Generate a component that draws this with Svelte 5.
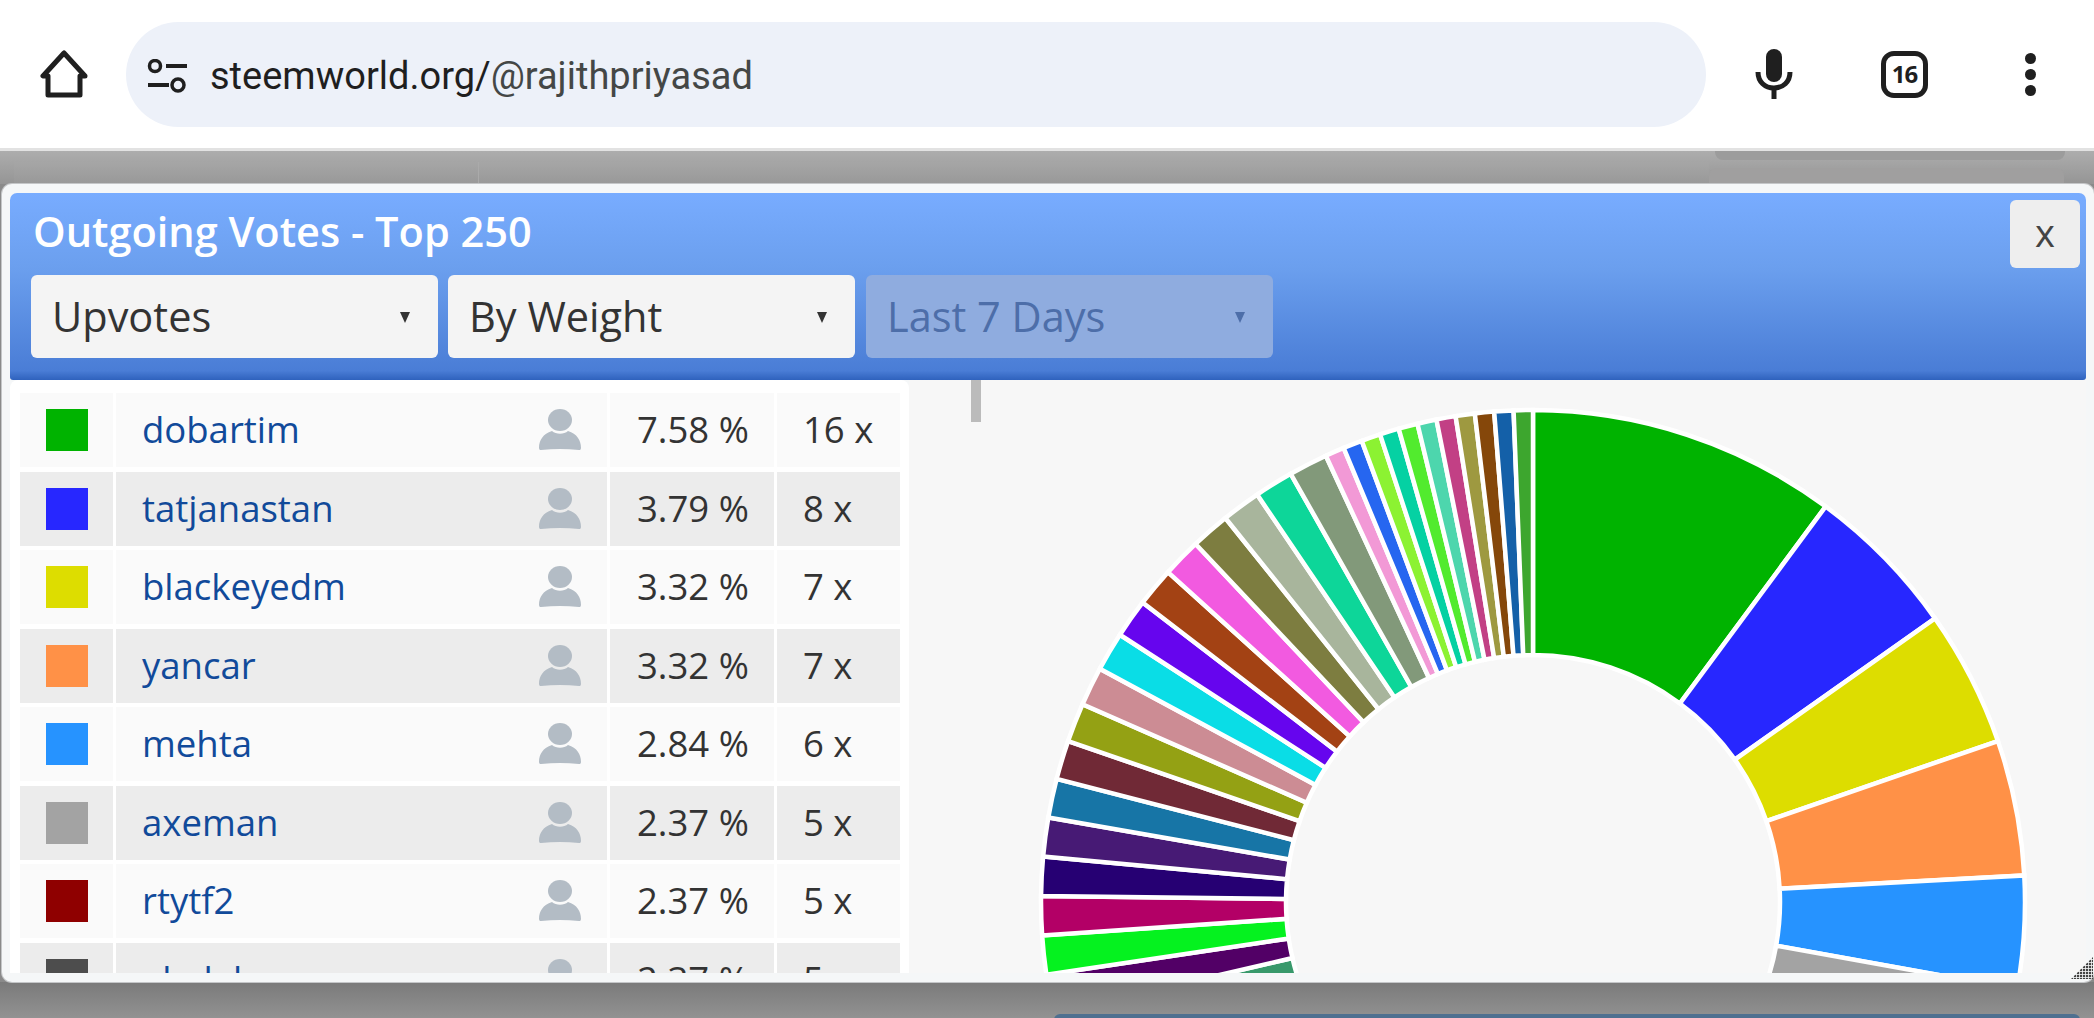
<script>
  // vote table rows
  const rows = [
    { name: "dobartim", color: "#00b300", pct: "7.58 %", count: "16 x" },
    { name: "tatjanastan", color: "#2727ff", pct: "3.79 %", count: "8 x" },
    { name: "blackeyedm", color: "#dddd00", pct: "3.32 %", count: "7 x" },
    { name: "yancar", color: "#ff9147", pct: "3.32 %", count: "7 x" },
    { name: "mehta", color: "#2693ff", pct: "2.84 %", count: "6 x" },
    { name: "axeman", color: "#a3a3a3", pct: "2.37 %", count: "5 x" },
    { name: "rtytf2", color: "#8f0000", pct: "2.37 %", count: "5 x" },
    { name: "akolak", color: "#4d4d4d", pct: "2.37 %", count: "5 x" },
  ];

  const cx = 624;
  const cy = 522;
  const outer = 492;
  const inner = 247;

  function point(r, deg) {
    const a = (deg * Math.PI) / 180;
    return `${(cx + r * Math.sin(a)).toFixed(2)} ${(cy - r * Math.cos(a)).toFixed(2)}`;
  }

  function slicePath(a, b) {
    return `M${point(outer, a)} A${outer} ${outer} 0 0 1 ${point(outer, b)} L${point(inner, b)} A${inner} ${inner} 0 0 0 ${point(inner, a)} Z`;
  }

  // slices of the right side, clockwise from the top
  let slices = [];
  let angle = 0;
  for (const [color, deg] of [
    ["#00b300", 36.5], ["#2727ff", 18.3], ["#dddd00", 16.1],
    ["#ff9147", 16.0], ["#2693ff", 13.3], ["#a3a3a3", 11.38],
  ]) {
    slices.push({ color, d: slicePath(angle, angle + deg) });
    angle += deg;
  }

  // left side: wide ones first, then the thin ones up to the top
  const wide = ["#38996b", "#520066", "#05f21f", "#b30066", "#260073", "#471a75", "#1775a6", "#702936", "#94a114", "#cc8c94", "#0adde6", "#6605ee", "#a34214", "#f25ae0", "#7d7d40", "#a8b59c", "#0dd699", "#82997a"];
  const thin = ["#f299d6", "#2666f0", "#8cf232", "#05d1a3", "#52eb2e", "#4dd6ad", "#c24085", "#9e9940", "#85470a", "#1460a8", "#3da62e"];
  angle = 252.3;
  wide.forEach((color) => {
    slices.push({ color, d: slicePath(angle, angle + 4.6) });
    angle += 4.6;
  });
  thin.forEach((color) => {
    const step = (360 - 335.1) / thin.length;
    slices.push({ color, d: slicePath(angle, angle + step) });
    angle += step;
  });
</script>

<div class="page">
  <header class="toolbar">
    <svg class="home" width="48" height="48" viewBox="0 0 48 48">
      <path d="M24 3 L3 26 H8 V45 H40 V26 H45 Z" fill="none" stroke="#1f1f1f" stroke-width="5" stroke-linejoin="round" />
    </svg>
    <div class="omnibox">
      <svg class="tune" width="40" height="34" viewBox="0 0 40 34">
        <circle cx="8" cy="7" r="5.5" fill="none" stroke="#1f1f1f" stroke-width="3.5" />
        <path d="M19 7 H40 M1 26 H22" stroke="#1f1f1f" stroke-width="4" />
        <circle cx="31" cy="26" r="6" fill="none" stroke="#1f1f1f" stroke-width="3.5" />
      </svg>
      <span class="url">steemworld.org/<span class="path">@rajithpriyasad</span></span>
    </div>
    <svg class="mic" width="38" height="52" viewBox="0 0 38 52">
      <rect x="11" y="1" width="16" height="33" rx="8" fill="#1f1f1f" />
      <path d="M3 24 C3 34 10 40 19 40 C28 40 35 34 35 24" fill="none" stroke="#1f1f1f" stroke-width="5" />
      <path d="M19 40 V51" stroke="#1f1f1f" stroke-width="5" />
    </svg>
    <div class="tabs">16</div>
    <div class="dots"><i></i><i></i><i></i></div>
  </header>

  <div class="backdrop">
    <div class="behind-top">
      <div class="behind-band"></div>
      <div class="behind-row">
        <div class="behind-cell first"></div>
        <div class="behind-cell second"></div>
        <div class="behind-card"></div>
      </div>
    </div>

    <section class="modal">
      <div class="head">
        <div class="title">Outgoing Votes - Top 250</div>
        <div class="selects">
          <div class="select">Upvotes<span class="arrow"></span></div>
          <div class="select">By Weight<span class="arrow"></span></div>
          <div class="select off">Last 7 Days<span class="arrow"></span></div>
        </div>
        <div class="close">x</div>
      </div>

      <div class="body">
        <div class="list">
          {#each rows as row, i}
            <div class="row" class:even={i % 2 === 1}>
              <div class="cell swatch"><span style="background:{row.color}"></span></div>
              <div class="cell name">
                <span class="label">{row.name}</span>
                <svg width="42" height="42" viewBox="0 0 42 42">
                  <ellipse cx="21" cy="11" rx="12" ry="11" fill="#b3bcc5" />
                  <path d="M0 39 C0 31 4 25 13 22 C17 25.500 25 25.500 29 22 C38 25 42 31 42 39 Q42 41.500 40 41 Q21 39 2 41 Q0 41.500 0 39 Z" fill="#b3bcc5" />
                </svg>
              </div>
              <div class="cell pct"><span class="label">{row.pct}</span></div>
              <div class="cell count"><span class="label">{row.count}</span></div>
            </div>
          {/each}
        </div>
        <div class="chart">
          <div class="thumb"></div>
          <svg width="1176" height="593" viewBox="0 0 1176 593">
            {#each slices as s}
              <path d={s.d} fill={s.color} stroke="#fff" stroke-width="4.5" />
            {/each}
          </svg>
        </div>
      </div>
      <svg class="grip" width="22" height="22" viewBox="0 0 22 22">
        <defs>
          <pattern id="grip-dots" width="3" height="3" patternUnits="userSpaceOnUse">
            <rect width="2.200" height="2.200" fill="#444" />
          </pattern>
        </defs>
        <path d="M22 0 V22 H0 Z" fill="url(#grip-dots)" />
      </svg>
    </section>

    <div class="behind-bottom"><div class="behind-bar"></div></div>
  </div>
</div>

<style>
  :global(body) {
    margin: 0;
    background: #8a8a8a;
  }
  .page {
    width: 2094px;
    height: 1018px;
    overflow: hidden;
    font-family: "Open Sans", sans-serif;
    color: #333;
  }
  .toolbar {
    height: 148px;
    box-sizing: border-box;
    background: #fff;
    display: flex;
    align-items: center;
  }
  .home {
    margin-left: 40px;
    margin-top: -1px;
  }
  .omnibox {
    margin-left: 38px;
    width: 1580px;
    height: 105px;
    margin-top: 1px;
    border-radius: 53px;
    background: #edf1f9;
    display: flex;
    align-items: center;
  }
  .tune {
    margin-left: 21px;
    margin-top: 2px;
  }
  .url {
    margin-left: 23px;
    margin-top: 2px;
    font-family: Roboto, sans-serif;
    font-size: 38px;
    color: #1f1f1f;
  }
  .path {
    color: #444746;
  }
  .mic {
    margin-left: 49px;
  }
  .tabs {
    margin-left: 88px;
    width: 47px;
    height: 47px;
    box-sizing: border-box;
    border: 5px solid #1f1f1f;
    border-radius: 13px;
    font-family: "Open Sans", sans-serif;
    font-weight: 700;
    font-size: 24px;
    letter-spacing: -1px;
    line-height: 36px;
    text-align: center;
    color: #1f1f1f;
  }
  .dots {
    margin-left: 97px;
    display: flex;
    flex-direction: column;
    gap: 5px;
  }
  .dots i {
    display: block;
    width: 11px;
    height: 11px;
    border-radius: 50%;
    background: #1f1f1f;
  }
  .backdrop {
    height: 870px;
    border-top: 3px solid #e2e2e2;
    background: #8a8a8a;
  }
  .behind-top {
    height: 33px;
    box-sizing: border-box;
    background: linear-gradient(#adadad, #959595);
  }
  .behind-band {
    height: 9px;
    width: 350px;
    margin-left: 1715px;
    border-radius: 0 0 8px 8px;
    background: #9c9c9c;
  }
  .behind-row {
    display: flex;
    height: 24px;
  }
  .behind-cell {
    height: 24px;
    margin-top: 2px;
    background: linear-gradient(#a6a6a6, #979797);
  }
  .first {
    width: 464px;
    margin-left: 14px;
    border-right: 1px solid #aaa;
  }
  .second {
    width: 1230px;
  }
  .behind-card {
    width: 355px;
    margin-top: 8px;
    border-radius: 8px 8px 0 0;
    background: #a09f9f;
  }
  .modal {
    position: relative;
    height: 798px;
    box-sizing: border-box;
    margin-left: 2px;
    padding: 9px 8px 10px;
    background: #f5f7f8;
    border-radius: 10px;
    box-shadow: 0 0 0 1px #c4c6c8;
  }
  .head {
    position: relative;
    height: 187px;
    box-sizing: border-box;
    padding: 0 0 0 21px;
    border-radius: 7px 7px 3px 3px;
    background: linear-gradient(#78acff 0%, #6b9fee 40%, #4a7dd6 95%, #2f62bd 100%);
  }
  .title {
    padding: 13px 0 0 2px;
    height: 69px;
    box-sizing: border-box;
    font-size: 41.5px;
    font-weight: 600;
    line-height: 50px;
    color: #fff;
  }
  .selects {
    display: flex;
    gap: 10px;
    margin-top: 13px;
  }
  .select {
    position: relative;
    width: 407px;
    height: 83px;
    box-sizing: border-box;
    padding-left: 21px;
    border-radius: 6px;
    background: #f4f4f4;
    font-size: 41.5px;
    line-height: 82px;
  }
  .select.off {
    margin-left: 1px;
    background: #8facdf;
    color: #4d6ea9;
  }
  .arrow {
    position: absolute;
    right: 28px;
    top: 37px;
    border-left: 5px solid transparent;
    border-right: 5px solid transparent;
    border-top: 11px solid #333;
  }
  .off .arrow {
    border-top-color: #4d6ea9;
  }
  .close {
    position: absolute;
    top: 7px;
    right: 6px;
    width: 70px;
    height: 68px;
    border-radius: 6px;
    background: #eee;
    color: #444;
    font-size: 38px;
    line-height: 64px;
    text-align: center;
  }
  .body {
    display: flex;
    height: 593px;
    overflow: hidden;
  }
  .list {
    width: 899px;
    box-sizing: border-box;
    padding: 13px 9px 0 10px;
    background: #fff;
    border-radius: 8px 8px 0 0;
    flex-shrink: 0;
  }
  .row {
    display: flex;
    height: 74px;
    margin-bottom: 4.5px;
    gap: 3px;
  }
  .cell {
    background: #fafafa;
    display: flex;
    align-items: center;
    font-size: 36.5px;
  }
  .label {
    margin-bottom: 2px;
  }
  .even .cell {
    background: #ececec;
  }
  .swatch {
    width: 93px;
    justify-content: center;
  }
  .swatch span {
    width: 42px;
    height: 42px;
  }
  .name {
    width: 491px;
    box-sizing: border-box;
    padding: 0 26px 0 26px;
    justify-content: space-between;
    color: #114a9a;
  }
  .pct {
    width: 164px;
    padding-left: 27px;
    box-sizing: border-box;
  }
  .count {
    flex: 1;
    padding-left: 26px;
  }
  .chart {
    position: relative;
    flex: 1;
    background: #f7f7f7;
  }
  .chart svg {
    display: block;
  }
  .thumb {
    position: absolute;
    left: 62px;
    top: 0;
    width: 10px;
    height: 42px;
    background: #bbb;
  }
  .grip {
    position: absolute;
    right: 1px;
    bottom: 3px;
  }
  .behind-bottom {
    height: 36px;
    padding: 32px 14px 0 1054px;
    box-sizing: border-box;
    background: linear-gradient(#7a7a7a, #929292);
  }
  .behind-bar {
    height: 10px;
    border-radius: 6px 6px 0 0;
    background: #4f7090;
  }
</style>
